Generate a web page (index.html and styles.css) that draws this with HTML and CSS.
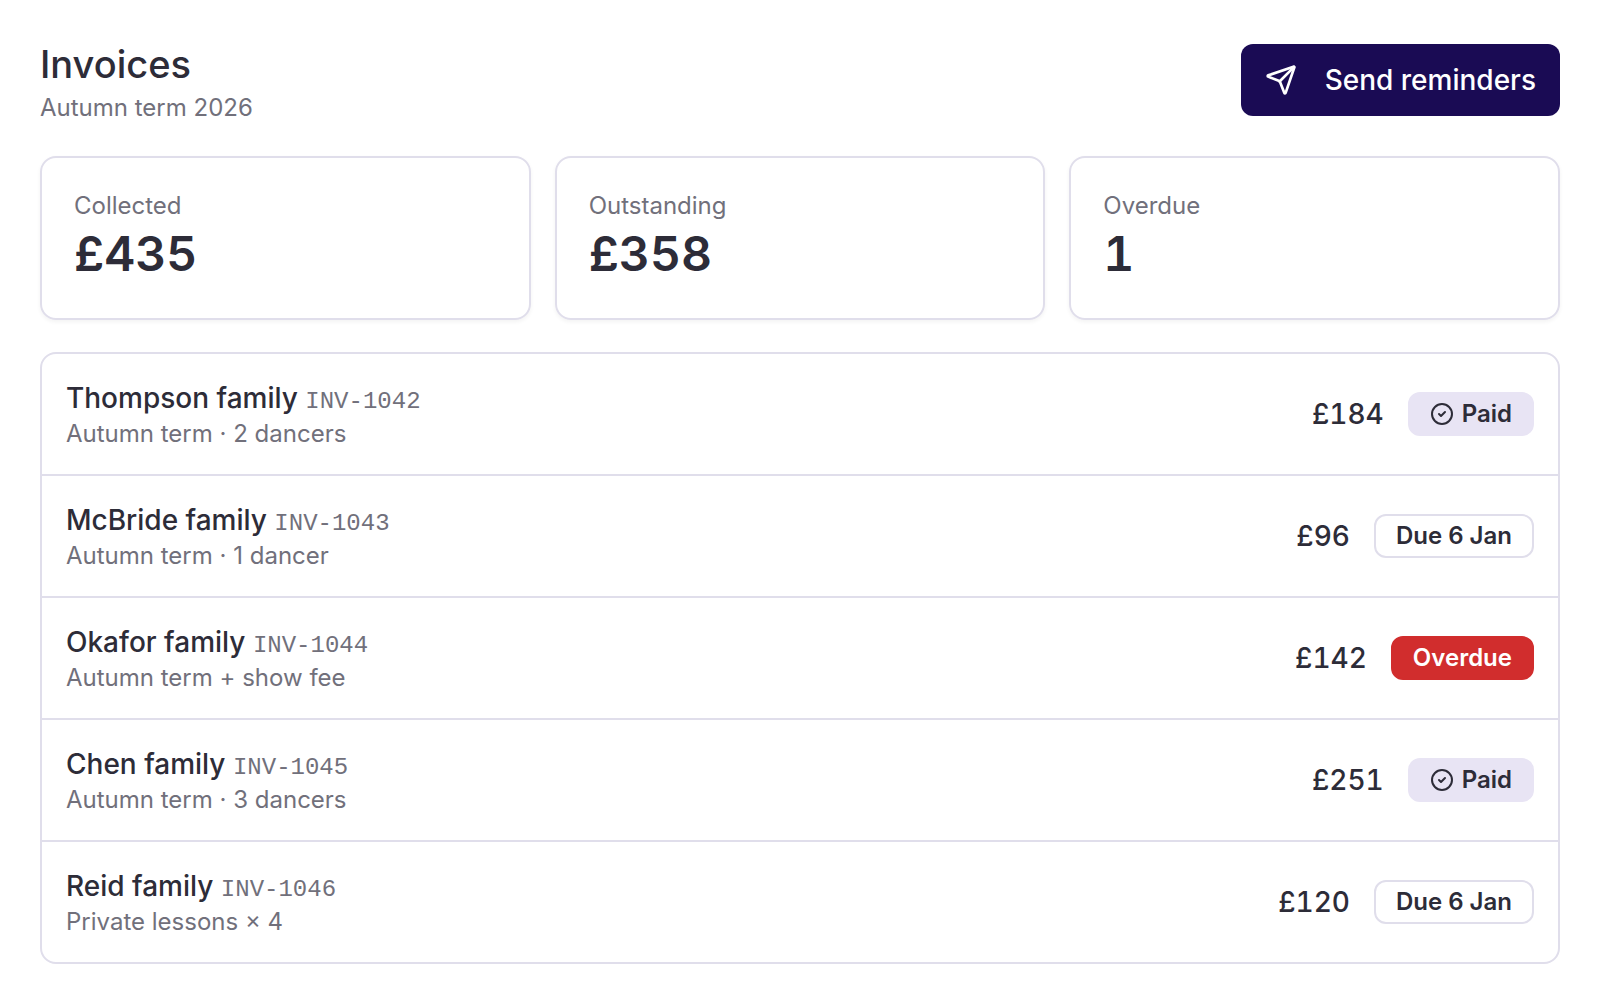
FILE: index.html
```html
<!DOCTYPE html>
<html lang="en">
<head>
    <meta charset="utf-8">
    <title>Invoices</title>
    <link rel="stylesheet" href="styles.css">
</head>
<body>
    <header class="header">
        <div>
            <h1>Invoices</h1>
            <p class="muted">Autumn term 2026</p>
        </div>
        <button type="button" class="send">
            <svg class="send-icon" viewBox="0 0 24 24">
                <path d="M14.536 21.686a.5.5 0 0 0 .937-.024l6.5-19a.496.496 0 0 0-.635-.635l-19 6.5a.5.5 0 0 0-.024.937l7.93 3.18a2 2 0 0 1 1.112 1.11z"/>
                <path d="m21.854 2.147-10.94 10.939"/>
            </svg>
            Send reminders
        </button>
    </header>

    <section class="stats">
        <div class="stat">
            <p class="muted">Collected</p>
            <p class="figure">£435</p>
        </div>
        <div class="stat">
            <p class="muted">Outstanding</p>
            <p class="figure">£358</p>
        </div>
        <div class="stat">
            <p class="muted">Overdue</p>
            <p class="figure">1</p>
        </div>
    </section>

    <ul class="invoices">
        <li>
            <div class="details">
                <p class="name">Thompson family <span class="number">INV-1042</span></p>
                <p class="muted">Autumn term · 2 dancers</p>
            </div>
            <span class="amount">£184</span>
            <span class="badge paid">
                <svg class="check" viewBox="0 0 24 24"><circle cx="12" cy="12" r="10"/><path d="m9 12 2 2 4-4"/></svg>
                Paid
            </span>
        </li>
        <li>
            <div class="details">
                <p class="name">McBride family <span class="number">INV-1043</span></p>
                <p class="muted">Autumn term · 1 dancer</p>
            </div>
            <span class="amount">£96</span>
            <span class="badge">Due 6 Jan</span>
        </li>
        <li>
            <div class="details">
                <p class="name">Okafor family <span class="number">INV-1044</span></p>
                <p class="muted">Autumn term + show fee</p>
            </div>
            <span class="amount">£142</span>
            <span class="badge overdue">Overdue</span>
        </li>
        <li>
            <div class="details">
                <p class="name">Chen family <span class="number">INV-1045</span></p>
                <p class="muted">Autumn term · 3 dancers</p>
            </div>
            <span class="amount">£251</span>
            <span class="badge paid">
                <svg class="check" viewBox="0 0 24 24"><circle cx="12" cy="12" r="10"/><path d="m9 12 2 2 4-4"/></svg>
                Paid
            </span>
        </li>
        <li>
            <div class="details">
                <p class="name">Reid family <span class="number">INV-1046</span></p>
                <p class="muted">Private lessons × 4</p>
            </div>
            <span class="amount">£120</span>
            <span class="badge">Due 6 Jan</span>
        </li>
    </ul>
</body>
</html>
```

FILE: styles.css
```css
* {
    box-sizing: border-box;
}

body {
    margin: 0;
    padding: 36px 40px;
    background-color: #fff;
    color: #2d2c38;
    font-family: Inter, sans-serif;
    font-size: 28px;
    line-height: 40px;
}

h1, p, ul {
    margin: 0;
    padding: 0;
}

svg {
    fill: none;
    stroke: currentColor;
    stroke-width: 2;
    stroke-linecap: round;
    stroke-linejoin: round;
}

.header {
    display: flex;
    align-items: center;
    justify-content: space-between;
    margin-bottom: 32px;
}

h1 {
    font-size: 38px;
    font-weight: 500;
    line-height: 56px;
}

.muted {
    color: #71707b;
    font-size: 24px;
    line-height: 32px;
}

.send {
    display: flex;
    align-items: center;
    gap: 28px;
    height: 72px;
    padding: 0 24px;
    border: none;
    border-radius: 12px;
    background-color: #1a0b54;
    color: #fff;
    font-family: inherit;
    font-size: 28px;
    font-weight: 500;
    cursor: pointer;
}

.send-icon {
    width: 32px;
    height: 32px;
}

.stats {
    display: grid;
    grid-template-columns: repeat(3, 1fr);
    gap: 24px;
    margin-bottom: 32px;
}

.stat {
    padding: 32px;
    border: 2px solid #e0deeb;
    border-radius: 16px;
    box-shadow: 0 2px 4px rgba(0, 0, 0, 0.05);
}

.figure {
    font-size: 48px;
    font-weight: 600;
    line-height: 64px;
    font-variant-numeric: tabular-nums;
}

.invoices {
    border: 2px solid #e0deeb;
    border-radius: 16px;
    list-style: none;
}

.invoices li {
    display: flex;
    align-items: center;
    gap: 24px;
    padding: 24px;
}

.invoices li + li {
    border-top: 2px solid #e0deeb;
}

.details {
    flex: 1;
}

.name {
    font-weight: 500;
}

.number {
    color: #71707b;
    font-family: "Liberation Mono", monospace;
    font-size: 24px;
    font-weight: 400;
    line-height: 1;
}

.amount {
    font-weight: 500;
    font-variant-numeric: tabular-nums;
}

.badge {
    display: flex;
    align-items: center;
    gap: 8px;
    padding: 4px 20px;
    border: 2px solid #e0deeb;
    border-radius: 12px;
    font-size: 24px;
    font-weight: 600;
    line-height: 32px;
}

.paid {
    border-color: #e8e4f4;
    background-color: #e8e4f4;
}

.overdue {
    border-color: #d12d2d;
    background-color: #d12d2d;
    color: #fff;
}

.check {
    width: 24px;
    height: 24px;
}
```
